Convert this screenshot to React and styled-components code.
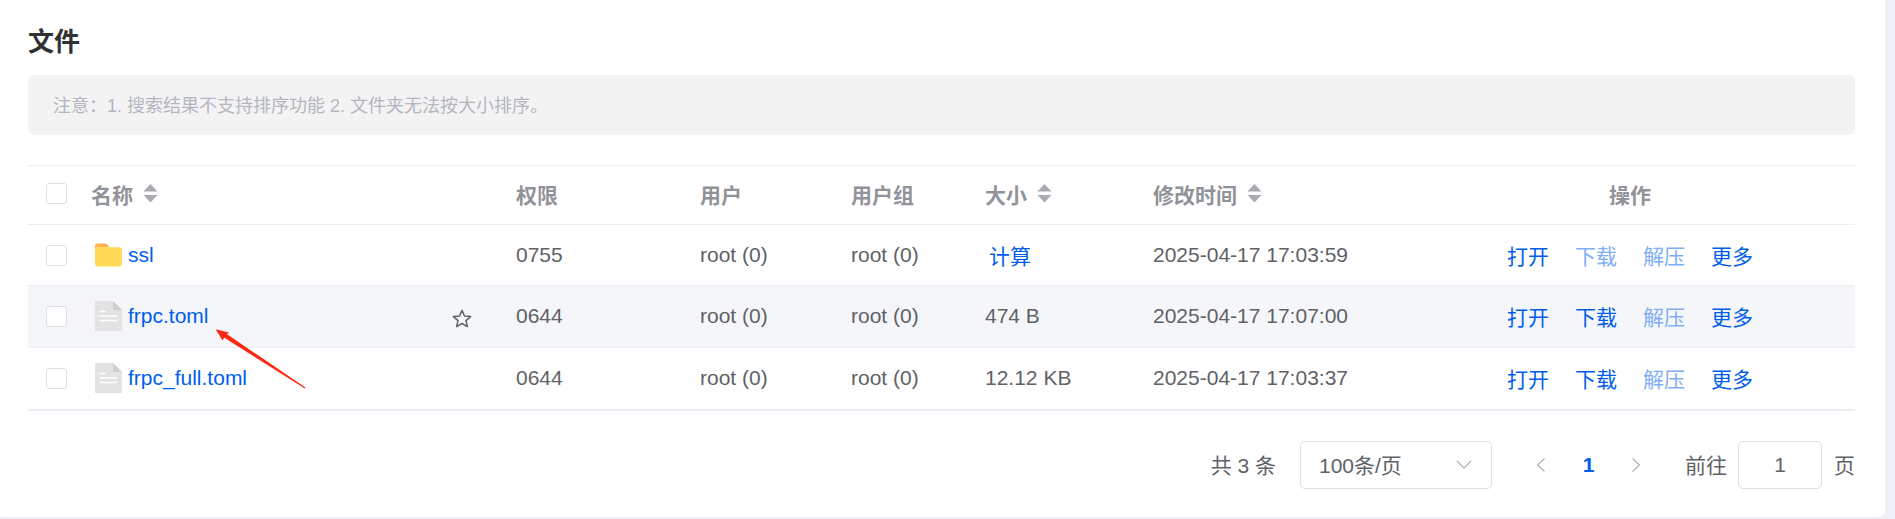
import React from "react";
import styled, { createGlobalStyle } from "styled-components";

const Global = createGlobalStyle`
  html, body { margin: 0; padding: 0; background: #eef0f5; }
  body {
    width: 1895px;
    height: 519px;
    overflow: hidden;
    font-family: "Liberation Sans", "Noto Sans CJK SC", sans-serif;
  }
`;

const Page = styled.div`
  width: 1885px;
  height: 517px;
  box-sizing: border-box;
  background: #fff;
  border-radius: 0 0 5px 3px;
  padding: 27px 30px 0 28px;
  position: relative;
`;

const Title = styled.h1`
  margin: 0;
  height: 48px;
  font-size: 26px;
  line-height: 30px;
  font-weight: 700;
  color: #303133;
`;

const Notice = styled.div`
  height: 60px;
  padding: 0 0 2px 25px;
  box-sizing: border-box;
  display: flex;
  align-items: center;
  background: #f3f3f4;
  border-radius: 6px;
  font-size: 18px;
  color: #b4b7c0;
`;

const Table = styled.div`
  margin-top: 30px;
  border-top: 1px solid #ebeef5;
  border-bottom: 2px solid #ebeef5;
`;

const columns = "63px 425px 184px 151px 134px 168px 252px 1fr";

const HeadRow = styled.div`
  display: grid;
  grid-template-columns: ${columns};
  align-items: center;
  height: 59px;
  box-sizing: border-box;
  padding-bottom: 3px;
  border-bottom: 1px solid #ebeef5;
  font-size: 21px;
  font-weight: 700;
  color: #909399;
`;

const Row = styled.div`
  display: grid;
  grid-template-columns: ${columns};
  align-items: center;
  height: 61.3px;
  box-sizing: border-box;
  border-bottom: ${(p) => (p.$last ? "none" : "1px solid #ebeef5")};
  background: ${(p) => (p.$hover ? "#f5f6fa" : "#fff")};
  font-size: 21px;
  color: #606266;
`;

const CheckCell = styled.div`
  padding-left: 18px;
  display: flex;
`;

const Check = styled.span`
  width: 21px;
  height: 21px;
  box-sizing: border-box;
  border: 1px solid #dcdfe6;
  border-radius: 3px;
  background: #fff;
`;

const HeadCell = styled.div`
  display: flex;
  align-items: center;
  gap: 10px;
`;

const CenterHead = styled(HeadCell)`
  justify-content: center;
`;

const NameCell = styled.div`
  display: flex;
  align-items: center;
  padding-left: 4px;
  gap: 6px;
  position: relative;
`;

const FileName = styled.span`
  color: #005eeb;
`;

const StarSlot = styled.span`
  position: absolute;
  left: 361px;
  top: 0;
  bottom: 0;
  display: flex;
  align-items: center;
  padding-top: 4px;
`;

const Calc = styled.span`
  padding-left: 4px;
  color: #005eeb;
`;

const Actions = styled.div`
  display: flex;
  justify-content: center;
  gap: 26px;
`;

const Action = styled.span`
  color: ${(p) => (p.$off ? "#80aef5" : "#005eeb")};
`;

const Pager = styled.div`
  margin-top: 30px;
  display: flex;
  align-items: center;
  justify-content: flex-end;
  font-size: 21px;
  color: #606266;
`;

const PagerText = styled.span`
  padding-bottom: 2px;
`;

const Total = styled(PagerText)`
  margin-right: 24px;
`;

const Box = styled.div`
  height: 48px;
  box-sizing: border-box;
  border: 1px solid #dcdfe6;
  border-radius: 5px;
  background: #fff;
  display: flex;
  align-items: center;
`;

const SizeSelect = styled(Box)`
  width: 192px;
  padding: 0 19px 0 18px;
  justify-content: space-between;
`;

const PageNav = styled.div`
  width: 193px;
  display: flex;
  align-items: center;
  justify-content: center;
  gap: 35px;
`;

const PageNum = styled.span`
  color: #005eeb;
  font-weight: 700;
`;

const JumpLabel = styled(PagerText)`
  margin-right: 11px;
`;

const JumpInput = styled(Box)`
  width: 84px;
  justify-content: center;
  margin-right: 12px;
`;

const ArrowLayer = styled.svg`
  position: absolute;
  left: 0;
  top: 0;
  pointer-events: none;
`;

const Caret = () => (
  <svg width="15" height="19" viewBox="0 0 15 19">
    <path d="M7.5 0 L14.5 7.5 H0.5 Z M0.5 11 H14.5 L7.5 18.5 Z" fill="#a8abb2" />
  </svg>
);

const FolderIcon = () => (
  <svg width="27" height="24" viewBox="0 0 28 24">
    <path d="M3 0 H10 C12 0 13 1 14 2.5 L15 4 H2 L0 6 V3 C0 1 1 0 3 0 Z" fill="#ffb04c" />
    <path d="M0 6 C0 4 1 3.5 3 3.5 H12 L14.5 4 H24.5 C26.8 4 28 5 28 7 V20.5 C28 22.8 26.8 24 24.5 24 H3.5 C1.2 24 0 22.8 0 20.5 Z" fill="#ffdb57" />
  </svg>
);

const FileIcon = () => (
  <svg width="27" height="30" viewBox="0 0 27 30">
    <path d="M0 0 H18 L27 9 V30 H0 Z" fill="#e3e3e3" />
    <path d="M18 0 L27 9 H18 Z" fill="#cfcfcf" />
    <path d="M4.5 10.5 H11 M4.5 15 H22 M4.5 19.5 H22" stroke="#fff" strokeWidth="1.6" />
  </svg>
);

const StarIcon = () => (
  <svg width="20" height="19" viewBox="0 0 20 19">
    <path
      d="M10 1.4 L12.5 7 L18.6 7.6 L14 11.6 L15.4 17.6 L10 14.5 L4.6 17.6 L6 11.6 L1.4 7.6 L7.5 7 Z"
      fill="none"
      stroke="#606266"
      strokeWidth="1.5"
      strokeLinejoin="round"
    />
  </svg>
);

const Chevron = ({ dir, color = "#a8abb2" }) => {
  const paths = {
    left: "M10.5 0.5 L3.5 7 L10.5 13.5",
    right: "M3.5 0.5 L10.5 7 L3.5 13.5",
  };
  return (
    <svg width="14" height="14" viewBox="0 0 14 14">
      <path d={paths[dir]} fill="none" stroke={color} strokeWidth="1.1" />
    </svg>
  );
};

const ChevronDown = () => (
  <svg width="16" height="9" viewBox="0 0 16 9">
    <path d="M1 1 L8 8 L15 1" fill="none" stroke="#a8abb2" strokeWidth="1.1" />
  </svg>
);

const files = [
  { name: "ssl", folder: true, perm: "0755", size: null, time: "2025-04-17 17:03:59", download: false },
  { name: "frpc.toml", perm: "0644", size: "474 B", time: "2025-04-17 17:07:00", download: true, hover: true },
  { name: "frpc_full.toml", perm: "0644", size: "12.12 KB", time: "2025-04-17 17:03:37", download: true, last: true },
];

const App = () => (
  <Page>
    <Global />
    <Title>文件</Title>
    <Notice>注意：1. 搜索结果不支持排序功能 2. 文件夹无法按大小排序。</Notice>
    <Table>
      <HeadRow>
        <CheckCell><Check /></CheckCell>
        <HeadCell>名称 <Caret /></HeadCell>
        <HeadCell>权限</HeadCell>
        <HeadCell>用户</HeadCell>
        <HeadCell>用户组</HeadCell>
        <HeadCell>大小 <Caret /></HeadCell>
        <HeadCell>修改时间 <Caret /></HeadCell>
        <CenterHead>操作</CenterHead>
      </HeadRow>
      {files.map((f) => (
        <Row key={f.name} $hover={f.hover} $last={f.last}>
          <CheckCell><Check /></CheckCell>
          <NameCell>
            {f.folder ? <FolderIcon /> : <FileIcon />}
            <FileName>{f.name}</FileName>
            {f.hover && <StarSlot><StarIcon /></StarSlot>}
          </NameCell>
          <div>{f.perm}</div>
          <div>root (0)</div>
          <div>root (0)</div>
          <div>{f.size || <Calc>计算</Calc>}</div>
          <div>{f.time}</div>
          <Actions>
            <Action>打开</Action>
            <Action $off={!f.download}>下载</Action>
            <Action $off>解压</Action>
            <Action>更多</Action>
          </Actions>
        </Row>
      ))}
    </Table>
    <Pager>
      <Total>共 3 条</Total>
      <SizeSelect>
        <PagerText>100条/页</PagerText>
        <ChevronDown />
      </SizeSelect>
      <PageNav>
        <Chevron dir="left" />
        <PageNum>1</PageNum>
        <Chevron dir="right" />
      </PageNav>
      <JumpLabel>前往</JumpLabel>
      <JumpInput>1</JumpInput>
      <PagerText>页</PagerText>
    </Pager>
    <ArrowLayer width="400" height="500">
      <path d="M305.5 387.5 L304.8 388.6 L224 337.5 L226 333.5 Z" fill="#fb2a14" />
      <path d="M215.7 329.3 L229 332.5 L225.5 335.5 L222.5 340.5 Z" fill="#fb2a14" />
    </ArrowLayer>
  </Page>
);

export default App;
